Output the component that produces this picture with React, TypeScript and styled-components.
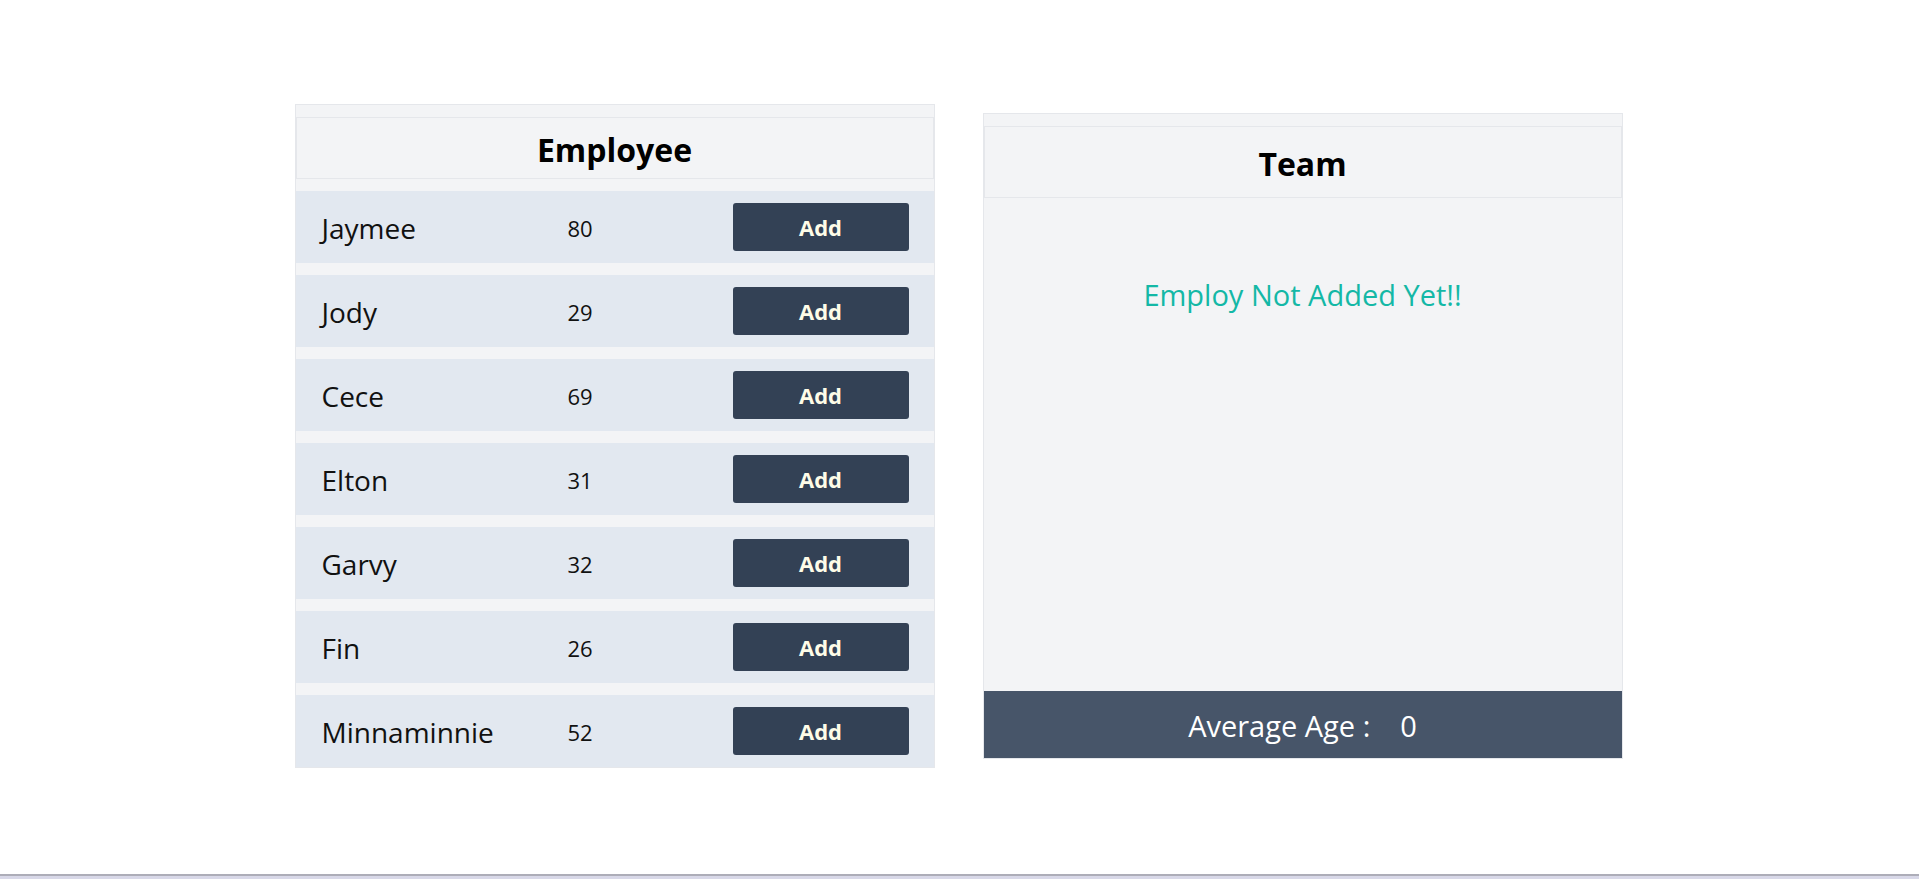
import React from "react";
import styled, { createGlobalStyle } from "styled-components";

const GlobalStyle = createGlobalStyle`
  html, body { margin: 0; padding: 0; background: #ffffff; }
  body { font-family: "Open Sans", "Noto Sans", sans-serif; color: #111827; }
  * { box-sizing: border-box; }
`;

const Page = styled.div`
  height: 879px;
  display: flex;
  flex-direction: column;
  overflow: hidden;
`;

const Main = styled.main`
  flex: 1;
  display: flex;
  justify-content: center;
  align-items: center;
  gap: 48px;
  padding: 0 2px 2px 0;
`;

const BottomStrip = styled.div`
  height: 5px;
  border-top: 2px solid #adadb8;
  background: #d8d8e8;
`;

const Panel = styled.section`
  width: 640px;
  background: #f3f4f6;
  border: 1px solid #e5e7eb;
  padding-top: 12px;
  display: flex;
  flex-direction: column;
`;

const Header = styled.header<{ $h: number }>`
  height: ${(p) => p.$h}px;
  border: 1px solid #e5e7eb;
  display: flex;
  align-items: center;
  justify-content: center;
  padding-top: 3px;
`;

const Title = styled.h2`
  margin: 0;
  font-size: 32px;
  font-weight: 700;
  color: #000;
`;

const List = styled.div`
  margin-top: 12px;
  display: flex;
  flex-direction: column;
  gap: 12px;
`;

const Row = styled.div`
  height: 72px;
  background: #e2e8f0;
  display: grid;
  grid-template-columns: 246px 1fr 176px;
  align-items: center;
  padding: 0 25px 0 26px;
`;

const Name = styled.span`
  font-size: 28px;
  color: #111;
  padding-top: 2px;
`;

const Age = styled.span`
  font-size: 22px;
  color: #111;
  padding-top: 2px;
`;

const AddButton = styled.button`
  height: 48px;
  width: 176px;
  border: none;
  border-radius: 3px;
  background: #334155;
  color: #fefce8;
  font-family: inherit;
  font-size: 22px;
  font-weight: 700;
  cursor: pointer;
`;

const TeamBody = styled.div`
  height: 493px;
  display: flex;
  justify-content: center;
  padding-top: 77px;
`;

const Empty = styled.p`
  margin: 0;
  font-size: 29px;
  line-height: 40px;
  color: #14b8a6;
`;

const Footer = styled.footer`
  height: 67px;
  background: #475569;
  color: #ffffff;
  display: flex;
  align-items: center;
  justify-content: center;
  font-size: 29px;
  padding-top: 2px;
`;

const FooterValue = styled.span`
  margin-left: 30px;
`;

const employees = [
  { name: "Jaymee", age: 80 },
  { name: "Jody", age: 29 },
  { name: "Cece", age: 69 },
  { name: "Elton", age: 31 },
  { name: "Garvy", age: 32 },
  { name: "Fin", age: 26 },
  { name: "Minnaminnie", age: 52 },
];

export default function App() {
  return (
    <Page>
      <GlobalStyle />
      <Main>
        <Panel>
          <Header $h={62}>
            <Title>Employee</Title>
          </Header>
          <List>
            {employees.map((e) => (
              <Row key={e.name}>
                <Name>{e.name}</Name>
                <Age>{e.age}</Age>
                <AddButton>Add</AddButton>
              </Row>
            ))}
          </List>
        </Panel>
        <Panel>
          <Header $h={72}>
            <Title>Team</Title>
          </Header>
          <TeamBody>
            <Empty>Employ Not Added Yet!!</Empty>
          </TeamBody>
          <Footer>
            Average Age :<FooterValue>0</FooterValue>
          </Footer>
        </Panel>
      </Main>
      <BottomStrip />
    </Page>
  );
}
